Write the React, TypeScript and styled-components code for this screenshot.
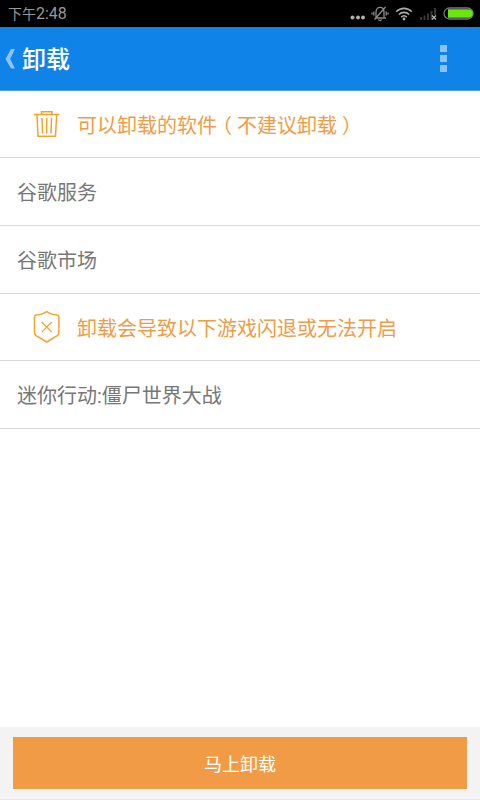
import React from "react";
import styled, { createGlobalStyle } from "styled-components";

const orange = "#f29b46";

const GlobalStyle = createGlobalStyle`
  * { box-sizing: border-box; }
  body {
    margin: 0;
    background: #fff;
    font-family: Roboto, "Noto Sans CJK SC", sans-serif;
  }
`;

const Page = styled.div`
  display: flex;
  flex-direction: column;
  min-height: 100vh;
`;

const StatusBar = styled.div`
  display: flex;
  align-items: center;
  justify-content: space-between;
  height: 27px;
  padding: 0 6px 0 8px;
  background: #000;
  color: #999;
`;

const Clock = styled.time`
  display: flex;
  align-items: baseline;
  font-size: 16px;
  line-height: 24px;
`;

const DayPart = styled.span`
  font-size: 14px;
`;

const StatusIcons = styled.div`
  display: flex;
  align-items: center;
  gap: 6px;
  svg { display: block; }
`;

const Header = styled.header`
  display: flex;
  align-items: center;
  justify-content: space-between;
  height: 64px;
  padding: 0 24px 0 4px;
  background: #1083e8;
  border-bottom: 1px solid #4b9fee;
`;

const HeaderButton = styled.button`
  display: flex;
  align-items: center;
  height: 48px;
  padding: 0;
  border: 0;
  background: none;
  color: #8cc2f5;
  cursor: pointer;
`;

const BackGroup = styled.div`
  display: flex;
  align-items: center;
  gap: 6px;
`;

const MenuButton = styled(HeaderButton)`
  justify-content: center;
  width: 26px;
`;

const Title = styled.h1`
  margin: 0;
  padding-top: 2px;
  color: #fff;
  font-size: 24px;
  font-weight: 500;
  line-height: 32px;
`;

const Content = styled.main`
  flex: 1;
`;

const SectionTitle = styled.h2`
  display: flex;
  align-items: center;
  gap: 15px;
  height: 67px;
  margin: 0;
  padding: 0 32px;
  border-bottom: 1px solid #d8d8d8;
  color: ${orange};
  font-size: 20px;
  font-weight: 400;
  line-height: 28px;
  svg { display: block; flex: none; }
`;

const SectionLabel = styled.span`
  padding-top: 3px;
`;

const Bracket = styled.span`
  padding: 0 5px;
  font-feature-settings: "halt";
`;

const List = styled.ul`
  margin: 0;
  padding: 0;
  list-style: none;
`;

const Item = styled.li`
  display: flex;
  align-items: center;
  height: 68px;
  padding: 3px 17px 0;
  border-bottom: 1px solid #d8d8d8;
  color: #777;
  font-size: 20px;
  line-height: 28px;
`;

const Footer = styled.footer`
  padding: 10px 13px;
  background: #f3f3f3;
  border-bottom: 1px solid #e9e9e6;
`;

const UninstallButton = styled.button`
  display: block;
  width: 100%;
  height: 52px;
  padding: 4px 0 0;
  border: 0;
  background: ${orange};
  color: #fff;
  font: 400 18px/28px Roboto, "Noto Sans CJK SC", sans-serif;
  cursor: pointer;
`;

const NotificationDots = () => (
  <svg width="16" height="20" viewBox="0 0 16 20" fill="#b0b0b0" aria-hidden="true">
    <circle cx="3.500" cy="13.500" r="2" />
    <circle cx="9" cy="13.500" r="2" />
    <circle cx="14" cy="13.500" r="2" />
  </svg>
);

const MutedBell = () => (
  <svg width="18" height="18" viewBox="0 0 18 18" fill="none" stroke="#8c8c8c" strokeWidth="1.3" aria-hidden="true">
    <path d="M4 13h11M5 12V7c0-3 1.8-4.6 4-4.6S13 4 13 7v5M7.3 14.5c.8 1.3 2.6 1.3 3.4 0M3.5 14.5 14.5 2M2.8 6.5v4M1 7.5v2M15.2 6.5v4M17 7.5v2" />
  </svg>
);

const Wifi = () => (
  <svg width="18" height="18" viewBox="0 0 18 18" fill="none" stroke="#ababab" strokeWidth="1.6" aria-hidden="true">
    <path d="M1.2 6.700c4.500-4.400 11.100-4.400 15.600 0M3.800 9.500c3-2.900 7.400-2.900 10.400 0M6.200 12.100c1.700-1.600 3.900-1.600 5.600 0" />
    <circle cx="9" cy="14" r="1.4" fill="#ababab" stroke="none" />
  </svg>
);

const NoSignal = () => (
  <svg width="18" height="18" viewBox="0 0 18 18" aria-hidden="true">
    <path fill="#363636" d="M1 12h2v3H1zM4.5 10.5h2V15h-2zM8 8.500h2V15H8zM11.500 6h2v9h-2zM15 3h2v7h-2z" />
    <path stroke="#b5b5b5" strokeWidth="1.3" d="m13 10.500 4 4m0-4-4 4" />
  </svg>
);

const Battery = () => (
  <svg width="31" height="13" viewBox="0 0 31 13" aria-hidden="true">
    <rect x="1" y="1" width="29" height="11" rx="5.5" fill="none" stroke="#777" strokeWidth="1.3" />
    <path fill="#69e510" d="M5 2.2h20.500a4.300 4.300 0 0 1 0 8.600H5z" />
  </svg>
);

const BackArrow = () => (
  <svg width="12" height="20" viewBox="0 0 12 20" fill="currentColor" aria-hidden="true">
    <path d="M7 0h4L6.200 10 11 19.500H7L1.500 10z" />
  </svg>
);

const MenuSquares = () => (
  <svg width="8" height="28" viewBox="0 0 8 28" fill="currentColor" aria-hidden="true">
    <path d="M1 0h7v7H1zM1 10h7v7H1zM1 20h7v7H1z" />
  </svg>
);

const Trash = () => (
  <svg width="30" height="32" viewBox="0 0 30 32" fill="none" stroke="#f9a02c" strokeWidth="1.5" aria-hidden="true">
    <path d="M2 6.500h25.500M9.500 6V3.700h10.500V6M5 7l1 21.200h17.500L24.700 7M10 10l.5 15.500M14.700 10v15.500M19.500 10l-.5 15.500" />
  </svg>
);

const Shield = () => (
  <svg width="30" height="34" viewBox="0 0 30 34" fill="none" stroke="#f9a02c" strokeWidth="1.5" strokeLinejoin="round" aria-hidden="true">
    <path d="M14.700 1.500c3 2.400 6.200 3.300 10.300 3.500 1.200.1 1.900.8 1.900 1.900V23c0 1.200-.6 2-1.600 2.700L14.700 32 4.100 25.700c-1-.7-1.600-1.500-1.600-2.700V6.900c0-1.100.7-1.800 1.900-1.900 4.100-.2 7.300-1.100 10.300-3.500z" />
    <path strokeWidth="1.2" d="m9.700 12 10.200 10.200m0-10.200L9.700 22.200" />
  </svg>
);

export default function App() {
  return (
    <>
      <GlobalStyle />
      <Page>
        <StatusBar>
          <Clock dateTime="14:48">
            <DayPart>下午</DayPart>2:48
          </Clock>
          <StatusIcons>
            <NotificationDots />
            <MutedBell />
            <Wifi />
            <NoSignal />
            <Battery />
          </StatusIcons>
        </StatusBar>
        <Header>
          <BackGroup>
            <HeaderButton type="button" aria-label="返回">
              <BackArrow />
            </HeaderButton>
            <Title>卸载</Title>
          </BackGroup>
          <MenuButton type="button" aria-label="更多">
            <MenuSquares />
          </MenuButton>
        </Header>
        <Content>
          <SectionTitle>
            <Trash />
            <SectionLabel>
              可以卸载的软件<Bracket>（</Bracket>不建议卸载<Bracket>）</Bracket>
            </SectionLabel>
          </SectionTitle>
          <List>
            <Item>谷歌服务</Item>
            <Item>谷歌市场</Item>
          </List>
          <SectionTitle>
            <Shield />
            <SectionLabel>卸载会导致以下游戏闪退或无法开启</SectionLabel>
          </SectionTitle>
          <List>
            <Item>迷你行动:僵尸世界大战</Item>
          </List>
        </Content>
        <Footer>
          <UninstallButton type="button">马上卸载</UninstallButton>
        </Footer>
      </Page>
    </>
  );
}
